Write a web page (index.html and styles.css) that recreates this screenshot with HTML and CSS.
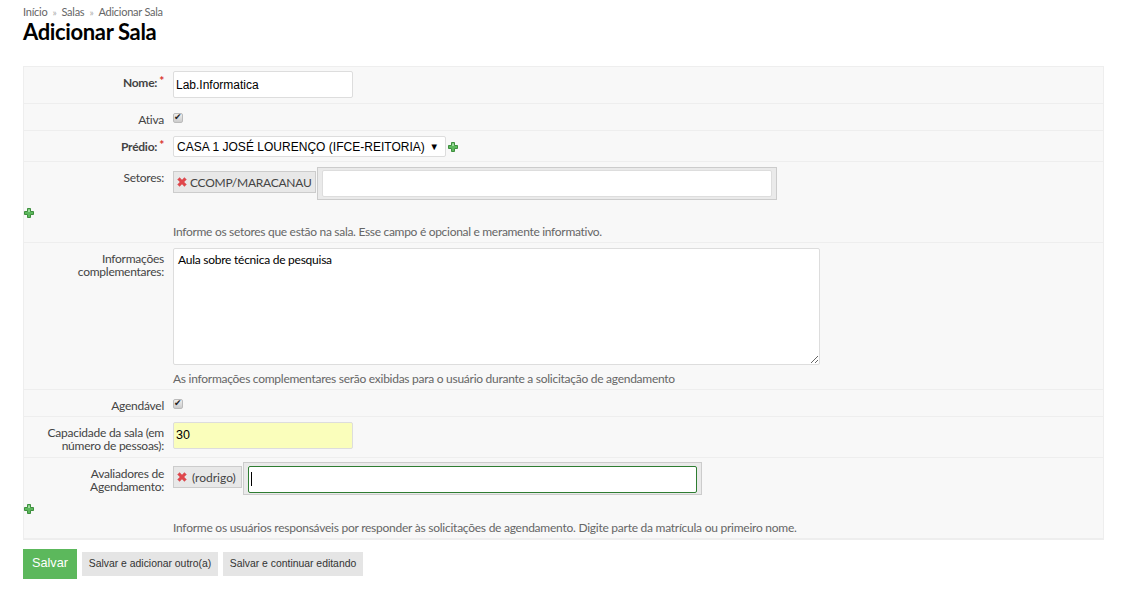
FILE: index.html
```html
<!DOCTYPE html>
<html lang="pt-BR">
<head>
<meta charset="utf-8">
<title>Adicionar Sala</title>
<link rel="stylesheet" href="styles.css">
</head>
<body>
<svg class="defs" width="0" height="0" aria-hidden="true">
  <symbol id="plus" viewBox="0 0 10 10">
    <path d="M3.5.5h3v3h3v3h-3v3h-3v-3h-3v-3h3z" fill="#5cb85c" stroke="#3f8f3f" stroke-width="1"/>
    <path d="M4 1.5h2v2.5H4z" fill="#9ddc9d"/>
  </symbol>
  <symbol id="cross" viewBox="0 0 10 10">
    <path d="M2.6.6 5 3l2.4-2.4 2 2L7 5l2.4 2.4-2 2L5 7 2.6 9.4l-2-2L3 5 .6 2.6z" fill="#e0474c" stroke="#d9666a" stroke-width=".6"/>
  </symbol>
</svg>
<nav class="breadcrumb"><a>Início</a><span class="sep">»</span><a>Salas</a><span class="sep">»</span><a>Adicionar Sala</a></nav>
<h1 class="title">Adicionar Sala</h1>
<form class="form">
  <div class="rows">
    <div class="row row-nome">
      <label class="lbl req">Nome:<i>*</i></label>
      <input class="text" type="text" value="Lab.Informatica">
    </div>
    <div class="row row-check">
      <label class="lbl">Ativa</label>
      <input class="check" type="checkbox" checked>
    </div>
    <div class="row row-predio">
      <label class="lbl req">Prédio:<i>*</i></label>
      <div class="inline">
        <div class="select"><span>CASA 1 JOSÉ LOURENÇO (IFCE-REITORIA)</span><b>▼</b></div>
        <svg class="ico"><use href="#plus"/></svg>
      </div>
    </div>
    <div class="row row-setores">
      <label class="lbl">Setores:</label>
      <div class="multi">
        <span class="chip chip-a"><svg class="ico-x"><use href="#cross"/></svg>CCOMP/MARACANAU</span>
        <span class="wrap wrap-a"><input class="auto" type="text"></span>
      </div>
      <svg class="ico add"><use href="#plus"/></svg>
      <p class="help">Informe os setores que estão na sala. Esse campo é opcional e meramente informativo.</p>
    </div>
    <div class="row row-info">
      <label class="lbl">Informações complementares:</label>
      <textarea class="area">Aula sobre técnica de pesquisa</textarea>
      <p class="help">As informações complementares serão exibidas para o usuário durante a solicitação de agendamento</p>
    </div>
    <div class="row row-check">
      <label class="lbl">Agendável</label>
      <input class="check" type="checkbox" checked>
    </div>
    <div class="row row-cap">
      <label class="lbl">Capacidade da sala (em número de pessoas):</label>
      <input class="text hl" type="text" value="30">
    </div>
    <div class="row row-aval">
      <label class="lbl">Avaliadores de Agendamento:</label>
      <div class="multi">
        <span class="chip chip-b"><svg class="ico-x"><use href="#cross"/></svg>(rodrigo)</span>
        <span class="wrap wrap-b"><span class="auto focus"><span class="caret"></span></span></span>
      </div>
      <svg class="ico add"><use href="#plus"/></svg>
      <p class="help">Informe os usuários responsáveis por responder às solicitações de agendamento. Digite parte da matrícula ou primeiro nome.</p>
    </div>
  </div>
  <div class="actions">
    <button class="btn primary" type="button">Salvar</button>
    <button class="btn b2" type="button">Salvar e adicionar outro(a)</button>
    <button class="btn b3" type="button">Salvar e continuar editando</button>
  </div>
</form>
</body>
</html>
```
FILE: styles.css
```css
* { box-sizing: border-box; }
html, body { margin: 0; padding: 0; background: #fff; }
body { padding: 0 25px 0 23px; font-family: Lato, sans-serif; font-size: 12px; letter-spacing: -.25px; color: #444; overflow: hidden; height: 598px; }
.defs { position: absolute; }

.breadcrumb { display: flex; gap: 5px; height: 12px; margin-top: 6px; font-size: 11px; line-height: 12px; letter-spacing: -.25px; color: #666; }
.sep { color: #aaa; font-size: 10px; }
.title { margin: 1px 0 0; height: 47px; font-size: 22px; line-height: 25px; font-weight: 700; color: #000; letter-spacing: -.36px; }

.rows { border: 1px solid #eee; border-bottom-width: 2px; background: #f8f8f8; }
.row { display: grid; grid-template-columns: 140px 1fr; column-gap: 9px; border-bottom: 1px solid #eee; align-items: start; }
.row:last-child { border-bottom: 0; }
.lbl { text-align: right; line-height: 13px; color: #444; }
.req { font-weight: 700; }
.req i { color: #d9302c; font-style: normal; margin-left: 2px; position: relative; top: -2px; font-size: 12px; }

.text { display: block; width: 180px; height: 27px; padding: 0 2px; border: 1px solid #ddd; border-radius: 2px; background: #fff; font: 12px "Liberation Sans", sans-serif; letter-spacing: 0; color: #000; }
.hl { padding-bottom: 1px; background: #fafebb; font-size: 12.5px; }

.row-nome { height: 37px; padding-top: 4px; }
.row-nome .lbl { padding-top: 5px; }
.row-check { height: 27px; }
.row-check .lbl { padding-top: 9px; }
.check { appearance: none; display: block; position: relative; width: 10px; height: 10px; margin: 9px 0 0; border: 1px solid #bbb; border-radius: 2px; background: linear-gradient(#eee, #ccc); }
.check::after { content: "✔"; position: absolute; left: 0; top: -2px; font: 9px/10px "DejaVu Sans", sans-serif; color: #222; }

.row-predio { height: 31px; padding-top: 5px; }
.row-predio .lbl { padding-top: 4px; }
.inline { display: flex; align-items: center; gap: 2px; }
.select { display: flex; justify-content: space-between; align-items: center; width: 273px; height: 21px; padding: 0 6px 0 3px; border: 1px solid #ddd; border-radius: 2px; background: #fff; font: 12px "Liberation Sans", sans-serif; letter-spacing: .02px; color: #000; }
.select b { font: 9.5px "Liberation Sans", sans-serif; color: #000; }
.ico { display: block; width: 10px; height: 10px; }

.multi { display: flex; align-items: flex-start; gap: 1px; }
.chip { display: flex; align-items: center; height: 22px; margin-top: 9px; border: 1px solid #ccc; background: #e8e8e8; font-size: 12px; color: #444; white-space: nowrap; }
.ico-x { width: 10px; height: 10px; flex: none; }
.chip-a { width: 143px; padding-left: 3px; gap: 3px; }
.chip-b { width: 69px; margin-top: 8px; padding-left: 3px; gap: 5px; letter-spacing: 0; }
.wrap { display: block; height: 33px; margin-top: 5px; padding: 2px 4px; border: 1px solid #ccc; background: #eaeaea; }
.wrap-a { width: 460px; }
.wrap-b { width: 459px; margin-top: 4px; padding: 3px 4px; }
.auto { display: block; width: 100%; height: 27px; border: 1px solid #ddd; border-radius: 2px; background: #fff; }
.focus { position: relative; border-color: #2e7d32; }
.caret { position: absolute; left: 2px; top: 5px; width: 1px; height: 14px; background: #000; }

.row-setores { height: 81px; grid-template-rows: 43px 16px 1fr; }
.row-setores .lbl { padding-top: 9px; }
.row-setores .help { letter-spacing: -.3px; }
.add { grid-column: 1; grid-row: 2; margin: 3px 0 0 0; }
.help { grid-column: 2; grid-row: 3; margin: 0; font-size: 12px; line-height: 14px; color: #666; white-space: nowrap; padding-top: 4px; }

.row-info { height: 147px; grid-template-rows: auto auto; padding-top: 5px; }
.row-info .lbl { padding-top: 4px; }
.area { display: block; width: 647px; height: 117px; padding: 4px; border: 1px solid #ddd; border-radius: 2px; background: #fff; font: 12px Lato, sans-serif; letter-spacing: -.25px; line-height: 13px; color: #000; resize: both; }
.row-info .help { grid-row: 2; padding-top: 4px; letter-spacing: -.27px; }

.row-cap { height: 41px; padding-top: 5px; }
.row-cap .lbl { padding-top: 4px; }

.row-aval { height: 80px; grid-template-rows: 43px 16px 1fr; }
.row-aval .lbl { padding-top: 9px; }

.actions { display: flex; align-items: center; gap: 5px; margin-top: 9px; }
.btn { height: 24px; padding: 0 0 1px; border: 0; background: #e5e5e5; font: 10.4px "Liberation Sans", sans-serif; letter-spacing: 0; color: #333; }
.primary { width: 54px; height: 30px; padding-bottom: 3px; background: #5cb85c; color: #fff; font-size: 12.7px; }
.b2 { width: 136px; }
.b3 { width: 140px; }
```
